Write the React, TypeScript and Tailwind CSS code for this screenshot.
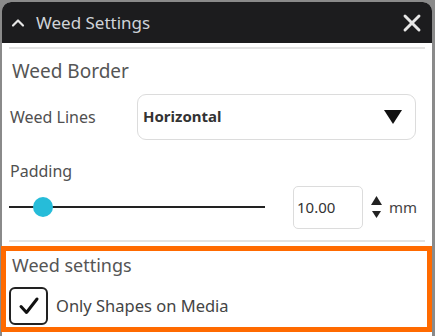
import { ChevronUp, X } from "lucide-react";

const font = { fontFamily: '"Noto Sans", "Open Sans", sans-serif' };

export default function App() {
  return (
    <div
      className="w-[435px] h-[336px] bg-[#8a8a8a] pt-[2px] pl-[2px] pr-[3px] overflow-hidden"
      style={font}
    >
      <div className="h-full bg-white rounded-t-[9px] flex flex-col">
        {/* Header */}
        <div className="h-[41px] shrink-0 bg-[#1c1c1e] rounded-t-[9px] flex items-center pl-[6px] pr-[6px]">
          <ChevronUp className="w-[20px] h-[20px] text-[#e6e6e6]" strokeWidth={2.6} />
          <span className="ml-[8px] text-[17px] text-[#cfd3d8] leading-none">Weed Settings</span>
          <X className="ml-auto w-[28px] h-[28px] text-[#e6e6e6]" strokeWidth={2.5} />
        </div>

        <div className="mt-[4px] mx-[7px] h-[2px] bg-[#e3e3e3]" />

        {/* Weed Border */}
        <div className="h-[44px] flex items-center pl-[10px] text-[19px] text-[#555]">Weed Border</div>

        <div className="h-[47px] flex items-center pl-[8px] pr-[16px]">
          <span className="w-[127px] text-[16px] text-[#505050]">Weed Lines</span>
          <div className="flex-1 h-[46px] border border-[#dcdcdc] rounded-[9px] flex items-center pl-[5px] pr-[13px]">
            <span className="text-[15px] font-bold text-[#333]">Horizontal</span>
            <svg className="ml-auto" width="18" height="14" viewBox="0 0 18 14">
              <polygon points="0,0 18,0 9,14" fill="#111" />
            </svg>
          </div>
        </div>

        {/* Padding */}
        <div className="h-[45px] flex items-end pb-[2px] pl-[8px] text-[16px] text-[#505050]">Padding</div>

        <div className="h-[44px] flex items-center pl-[7px]">
          <div className="relative w-[256px] h-[2px] bg-[#222]">
            <div className="absolute left-[24px] top-1/2 -translate-y-1/2 w-[20px] h-[20px] rounded-full bg-[#26bcd9]" />
          </div>
          <div className="ml-[28px] w-[70px] h-[43px] border border-[#dcdcdc] rounded-[5px] flex items-center pl-[3px] text-[15px] text-[#333]">
            10.00
          </div>
          <div className="ml-[8px] flex flex-col items-center gap-[6px]">
            <svg width="11" height="9" viewBox="0 0 11 9">
              <polygon points="5.5,0 11,9 0,9" fill="#222" />
            </svg>
            <svg width="9" height="7" viewBox="0 0 9 7">
              <polygon points="0,0 9,0 4.5,7" fill="#222" />
            </svg>
          </div>
          <span className="ml-[7px] text-[15px] text-[#444]">mm</span>
        </div>

        <div className="mt-[11px] mx-[7px] h-[2px] bg-[#e3e3e3]" />

        {/* Weed settings (highlighted) */}
        <div className="mt-[4px] -ml-[1px] h-[86px] border-[5px] border-[#ff6a00] flex flex-col pl-[3px]">
          <div className="h-[36px] flex items-center pb-[7px] pl-[3px] text-[18px] text-[#555]">Weed settings</div>
          <div className="flex items-center">
            <div className="w-[39px] h-[38px] border-[2px] border-[#222] rounded-[6px] flex items-center justify-center">
              <svg width="22" height="20" viewBox="0 0 22 20">
                <path d="M3 10.5 L8.5 16.5 L19 3" fill="none" stroke="#111" strokeWidth="3" strokeLinecap="round" strokeLinejoin="round" />
              </svg>
            </div>
            <span className="ml-[8px] text-[16.5px] text-[#444]">Only Shapes on Media</span>
          </div>
        </div>
      </div>
    </div>
  );
}
